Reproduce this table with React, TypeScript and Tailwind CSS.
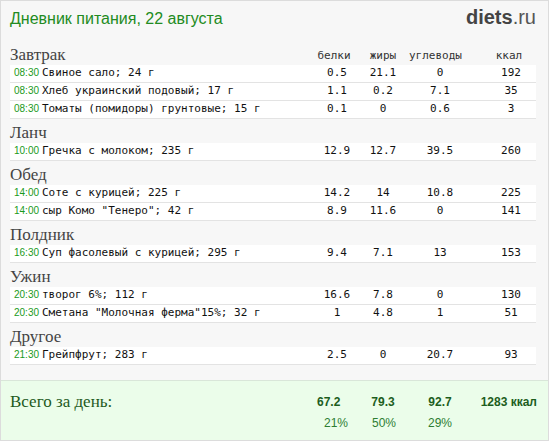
import React from "react";

type Item = { t: string; n: string; b: string; z: string; u: string; k: string };
type Section = { title: string; items: Item[] };

const sections: Section[] = [
  {
    title: "Завтрак",
    items: [
      { t: "08:30", n: "Свиное сало; 24 г", b: "0.5", z: "21.1", u: "0", k: "192" },
      { t: "08:30", n: "Хлеб украинский подовый; 17 г", b: "1.1", z: "0.2", u: "7.1", k: "35" },
      { t: "08:30", n: "Томаты (помидоры) грунтовые; 15 г", b: "0.1", z: "0", u: "0.6", k: "3" },
    ],
  },
  { title: "Ланч", items: [{ t: "10:00", n: "Гречка с молоком; 235 г", b: "12.9", z: "12.7", u: "39.5", k: "260" }] },
  {
    title: "Обед",
    items: [
      { t: "14:00", n: "Соте с курицей; 225 г", b: "14.2", z: "14", u: "10.8", k: "225" },
      { t: "14:00", n: "сыр Комо \"Тенеро\"; 42 г", b: "8.9", z: "11.6", u: "0", k: "141" },
    ],
  },
  { title: "Полдник", items: [{ t: "16:30", n: "Суп фасолевый с курицей; 295 г", b: "9.4", z: "7.1", u: "13", k: "153" }] },
  {
    title: "Ужин",
    items: [
      { t: "20:30", n: "творог 6%; 112 г", b: "16.6", z: "7.8", u: "0", k: "130" },
      { t: "20:30", n: "Сметана \"Молочная ферма\"15%; 32 г", b: "1", z: "4.8", u: "1", k: "51" },
    ],
  },
  { title: "Другое", items: [{ t: "21:30", n: "Грейпфрут; 283 г", b: "2.5", z: "0", u: "20.7", k: "93" }] },
];

const mono = "font-['DejaVu_Sans_Mono',monospace] text-[11px]";
const serif = "font-['Liberation_Serif',serif] text-[17px] leading-[20px]";
const cols = "grid grid-cols-[1fr_40px_52px_62px_65px]";

function Row({ it }: { it: Item }) {
  return (
    <div className={`${cols} h-[18px] bg-white border-b border-[#e3e3e3] text-[#111]`}>
      <div className="flex items-baseline pl-[4px] leading-[15px] whitespace-nowrap overflow-hidden">
        <span className="font-['Liberation_Sans',sans-serif] text-[10px] text-[#1a9a1a] w-[28px] shrink-0">{it.t}</span>
        <span className={mono}>{it.n}</span>
      </div>
      <div className={`${mono} leading-[15px] text-center`}>{it.b}</div>
      <div className={`${mono} leading-[15px] text-center`}>{it.z}</div>
      <div className={`${mono} leading-[15px] text-center`}>{it.u}</div>
      <div className={`${mono} leading-[15px] text-center pl-[15px]`}>{it.k}</div>
    </div>
  );
}

export default function App() {
  return (
    <div className="w-[549px] bg-[#f7f7f7] border border-[#dcdcdc] font-['Liberation_Sans',sans-serif]">
      <div className="h-[40px] pl-[9px] pr-[12px] pt-[6px] flex items-baseline justify-between">
        <div className="text-[16px] leading-[20px] text-[#228b22]">Дневник питания, 22 августа</div>
        <div className="text-[20px] leading-[20px] text-[#444]">
          <span className="font-bold">diets</span>
          <span className="text-[#555]">.ru</span>
        </div>
      </div>
      <div className="pl-[9px] pr-[12px]">
        {sections.map((s, i) => (
          <div key={s.title}>
            <div className={`${cols} h-[24px]`}>
              <div className={`${serif} pt-[4px] text-[#444]`}>{s.title}</div>
              {i === 0 ? (
                <>
                  <div className={`${mono} leading-[11px] pt-[9px] text-center pr-[6px] text-[#333]`}>белки</div>
                  <div className={`${mono} leading-[11px] pt-[9px] text-center text-[#333]`}>жиры</div>
                  <div className={`${mono} leading-[11px] pt-[9px] text-center pr-[10px] text-[#333]`}>углеводы</div>
                  <div className={`${mono} leading-[11px] pt-[9px] text-center pl-[11px] text-[#333]`}>ккал</div>
                </>
              ) : null}
            </div>
            {s.items.map((it, j) => (
              <Row key={j} it={it} />
            ))}
          </div>
        ))}
      </div>
      <div className="mt-[15px] h-[60px] bg-[#ebfdea] border-t border-[#d9e6d9] pl-[9px] pr-[12px]">
        <div className={`${cols} h-full`}>
          <div className={`${serif} pt-[11px] text-[#1d5a1d]`}>Всего за день:</div>
          <div className="pt-[14px] text-center text-[12px]">
            <div className="leading-[14px] font-bold text-[#1d5e1d] pr-[20px]">67.2</div>
            <div className="leading-[14px] mt-[7px] text-[#2e7d32] pr-[2px]">21%</div>
          </div>
          <div className="pt-[14px] text-center text-[12px]">
            <div className="leading-[14px] font-bold text-[#1d5e1d]">79.3</div>
            <div className="leading-[14px] mt-[7px] text-[#2e7d32] pl-[2px]">50%</div>
          </div>
          <div className="pt-[14px] text-center text-[12px]">
            <div className="leading-[14px] font-bold text-[#1d5e1d]">92.7</div>
            <div className="leading-[14px] mt-[7px] text-[#2e7d32]">29%</div>
          </div>
          <div className="pt-[14px] text-right text-[12px]">
            <div className="leading-[14px] font-bold text-[#1d5e1d] whitespace-nowrap -mr-[1px]">1283 ккал</div>
          </div>
        </div>
      </div>
    </div>
  );
}
